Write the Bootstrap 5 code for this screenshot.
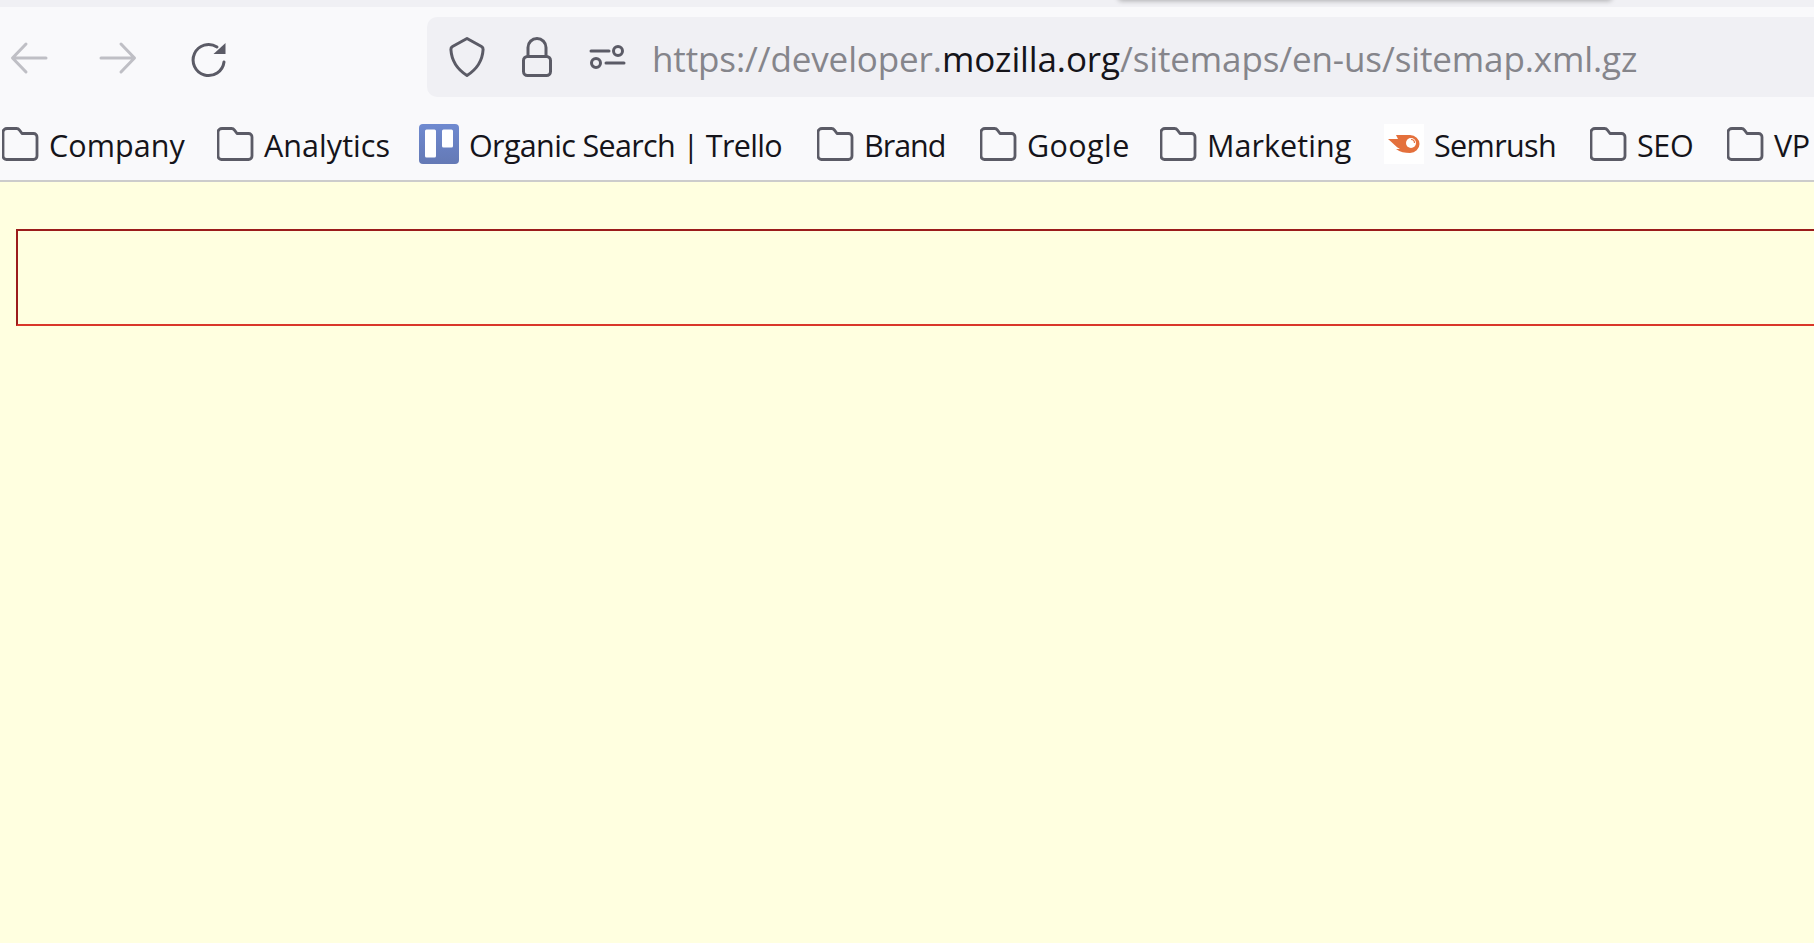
<!doctype html>
<html lang="en">
<head>
<meta charset="utf-8">
<title>sitemap.xml.gz</title>
<link href="https://cdn.jsdelivr.net/npm/bootstrap@5.3.0/dist/css/bootstrap.min.css" rel="stylesheet">
<style>
html,body{height:100%;overflow:hidden}
body{background:#ffffe0;font-family:"Open Sans","Noto Sans","Liberation Sans",sans-serif;color:#15141a}
.tabstrip{height:7px;background:#f0f0f4;position:relative;overflow:hidden}
.tabshadow{position:absolute;left:1118px;width:494px;top:-8px;height:8px;box-shadow:0 1px 5px rgba(0,0,0,.28);border-radius:4px}
.chromebar{background:#f9f9fb;border-bottom:2px solid #ccc;height:175px}
.navrow{height:90px;padding:10px 0 0 9.5px;gap:51.500px}
.navbtn{width:38px;height:38px;flex:none;display:block;overflow:visible}
.urlbox{margin-left:149px;height:80px;flex:1 1 auto;background:#f0f0f4;border-radius:10px 0 0 10px;padding-left:21px;gap:32px;min-width:0;white-space:nowrap;overflow:hidden}
.urltext{font-size:35px;letter-spacing:-.12px;color:#85858b;margin-left:-6px;line-height:80px;padding-top:3px}
.urlhost{color:#15141a}
.markrow{height:83px;padding:11px 0 0 2px;display:grid;grid-template-columns:215px 202px 398px 163px 180px 224px 206px 137px 1fr;white-space:nowrap;overflow:hidden}
.markitem{gap:9px;font-size:30.5px;letter-spacing:-.35px;line-height:40px}
.markitem:nth-child(1),.markitem:nth-child(2),.markitem:nth-child(6){letter-spacing:.05px}
.markitem:nth-child(3),.markitem:nth-child(7){letter-spacing:-.65px;gap:10px}
.markitem:nth-child(4){letter-spacing:-1px}
.markitem:nth-child(5){letter-spacing:.4px}
.marklabel{padding-top:2px}
.markicon{width:38px;height:40px;flex:none;display:block}
.markfav{width:40px;height:40px;flex:none;display:block}
.errorbox{margin:47px 0 0 16px;height:97px;border:2px solid #d9362a;border-top-color:#9b1c1c;border-left-color:#9b1c1c;border-right:0}
</style>
</head>
<body>
<svg width="0" height="0" class="d-block position-absolute">
<defs>
<symbol id="folder" viewBox="0 0 38 40"><path d="M5 4.500h9.500c1.500 0 2.300.6 3.200 1.800l2.300 3.200h11.500c2 0 3.500 1.500 3.500 3.500v19c0 2-1.500 3.500-3.500 3.500H4.500c-2 0-3.500-1.500-3.500-3.500V8c0-2 1.800-3.500 4-3.500z" fill="none" stroke="#5b5b66" stroke-width="2.800" stroke-linejoin="round"/></symbol>
</defs>
</svg>
<div class="tabstrip"><div class="tabshadow"></div></div>
<div class="chromebar">
  <div class="navrow d-flex align-items-center">
    <svg class="navbtn" viewBox="0 0 38 38"><path d="M36 20H3M16 6 2.500 20 16 34" fill="none" stroke="#bfbfc5" stroke-width="3" stroke-linecap="round" stroke-linejoin="round"/></svg>
    <svg class="navbtn" viewBox="0 0 38 38"><path d="M2 20h33M22 6l13.500 14L22 34" fill="none" stroke="#bfbfc5" stroke-width="3" stroke-linecap="round" stroke-linejoin="round"/></svg>
    <svg class="navbtn" viewBox="0 0 38 38"><path d="M35 24A15.500 15.500 0 1 1 28 9" fill="none" stroke="#5b5b66" stroke-width="3" stroke-linecap="round"/><path d="M36.500 5v11h-12z" fill="#5b5b66"/></svg>
    <div class="urlbox d-flex align-items-center">
      <svg class="navbtn" viewBox="0 0 38 38"><path d="M19 .5 33.500 8.500c1.200.7 1.700 1.600 1.600 3-.6 10-5 19-16.100 26C7.900 30.500 3.500 21.500 2.900 11.500c-.1-1.400.4-2.300 1.600-3z" fill="none" stroke="#5b5b66" stroke-width="3" stroke-linejoin="round"/></svg>
      <svg class="navbtn" viewBox="0 0 38 38"><rect x="5.500" y="18.500" width="27" height="19" rx="4" fill="none" stroke="#5b5b66" stroke-width="3"/><path d="M10 18.500V9.500a9 9 0 0 1 18 0v9" fill="none" stroke="#5b5b66" stroke-width="3"/></svg>
      <svg class="navbtn" viewBox="0 0 38 38"><path d="M3 13h18M18 25h18" fill="none" stroke="#5b5b66" stroke-width="3" stroke-linecap="round"/><circle cx="30" cy="13" r="4.500" fill="none" stroke="#5b5b66" stroke-width="3"/><circle cx="8" cy="25" r="4.500" fill="none" stroke="#5b5b66" stroke-width="3"/></svg>
      <div class="urltext">https://developer.<span class="urlhost">mozilla.org</span>/sitemaps/en-us/sitemap.xml.gz</div>
    </div>
  </div>
  <div class="markrow">
    <div class="markitem d-flex align-items-center"><svg class="markicon"><use href="#folder"/></svg><span class="marklabel">Company</span></div>
    <div class="markitem d-flex align-items-center"><svg class="markicon"><use href="#folder"/></svg><span class="marklabel">Analytics</span></div>
    <div class="markitem d-flex align-items-center"><svg class="markfav" viewBox="0 0 40 40"><defs><linearGradient id="trello" x1="0" y1="0" x2="0" y2="1"><stop offset="0" stop-color="#6f8ad0"/><stop offset="1" stop-color="#6479b5"/></linearGradient></defs><rect width="40" height="40" rx="4" fill="url(#trello)"/><rect x="6" y="5.500" width="11" height="28" rx="1.500" fill="#fff"/><rect x="23" y="5.500" width="11" height="18" rx="1.500" fill="#fff"/></svg><span class="marklabel">Organic Search | Trello</span></div>
    <div class="markitem d-flex align-items-center"><svg class="markicon"><use href="#folder"/></svg><span class="marklabel">Brand</span></div>
    <div class="markitem d-flex align-items-center"><svg class="markicon"><use href="#folder"/></svg><span class="marklabel">Google</span></div>
    <div class="markitem d-flex align-items-center"><svg class="markicon"><use href="#folder"/></svg><span class="marklabel">Marketing</span></div>
    <div class="markitem d-flex align-items-center"><svg class="markfav" viewBox="0 0 40 40"><rect width="40" height="40" fill="#fff"/><path d="M4 15h10l-2-4h14a9.500 9 0 0 1 0 18c-5 0-10-1-14-4h4C12 23 9 19 4 15z" fill="#e4703c"/><circle cx="27" cy="19" r="5" fill="#fff"/><path d="M27 15.500a3.500 3.500 0 0 1 3.500 3.500" fill="none" stroke="#e4703c" stroke-width="1.200"/></svg><span class="marklabel">Semrush</span></div>
    <div class="markitem d-flex align-items-center"><svg class="markicon"><use href="#folder"/></svg><span class="marklabel">SEO</span></div>
    <div class="markitem d-flex align-items-center"><svg class="markicon"><use href="#folder"/></svg><span class="marklabel">VP</span></div>
  </div>
</div>
<div class="errorbox"></div>
<script src="https://cdn.jsdelivr.net/npm/bootstrap@5.3.0/dist/js/bootstrap.bundle.min.js"></script>
</body>
</html>
